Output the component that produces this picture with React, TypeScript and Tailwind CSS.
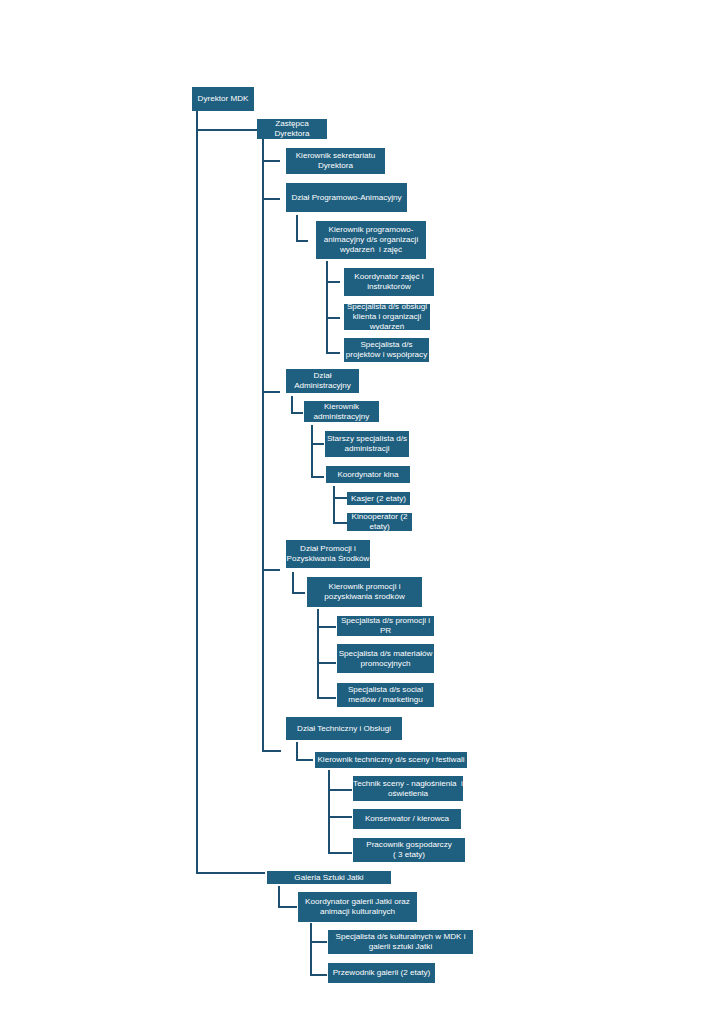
import React from "react";

type OrgNode = {
  lines: string[];
  x: number;
  y: number;
  w: number;
  h: number;
};

const nodes: OrgNode[] = [
  { lines: ["Dyrektor MDK"], x: 192, y: 87, w: 62, h: 24 },
  { lines: ["Zastępca", "Dyrektora"], x: 257, y: 119, w: 70, h: 20 },
  { lines: ["Kierownik sekretariatu", "Dyrektora"], x: 286, y: 148, w: 99, h: 26 },
  { lines: ["Dział Programowo-Animacyjny"], x: 286, y: 183, w: 121, h: 29 },
  {
    lines: ["Kierownik programowo-", "animacyjny d/s organizacji", "wydarzeń  i zajęć"],
    x: 316,
    y: 221,
    w: 110,
    h: 38,
  },
  { lines: ["Koordynator zajęć i", "instruktorów"], x: 344, y: 268, w: 90, h: 28 },
  {
    lines: ["Specjalista d/s obsługi", "klienta i organizacji", "wydarzeń"],
    x: 344,
    y: 304,
    w: 86,
    h: 26,
  },
  { lines: ["Specjalista d/s", "projektów i współpracy"], x: 344, y: 338, w: 85, h: 24 },
  { lines: ["Dział", "Administracyjny"], x: 286, y: 369, w: 73, h: 24 },
  { lines: ["Kierownik", "administracyjny"], x: 304, y: 401, w: 75, h: 21 },
  { lines: ["Starszy specjalista d/s", "administracji"], x: 325, y: 431, w: 84, h: 26 },
  { lines: ["Koordynator kina"], x: 326, y: 466, w: 84, h: 17 },
  { lines: ["Kasjer (2 etaty)"], x: 347, y: 492, w: 63, h: 13 },
  { lines: ["Kinooperator (2", "etaty)"], x: 347, y: 513, w: 65, h: 18 },
  { lines: ["Dział Promocji i", "Pozyskiwania Środków"], x: 286, y: 540, w: 84, h: 28 },
  { lines: ["Kierownik promocji i", "pozyskiwania środków"], x: 307, y: 577, w: 115, h: 30 },
  { lines: ["Specjalista d/s promocji i", "PR"], x: 337, y: 616, w: 97, h: 20 },
  { lines: ["Specjalista d/s materiałów", "promocyjnych"], x: 337, y: 644, w: 97, h: 29 },
  { lines: ["Specjalista d/s social", "mediów / marketingu"], x: 337, y: 683, w: 97, h: 24 },
  { lines: ["Dział Techniczny i Obsługi"], x: 286, y: 717, w: 116, h: 23 },
  { lines: ["Kierownik techniczny d/s sceny i festiwali"], x: 315, y: 752, w: 152, h: 16 },
  { lines: ["Technik sceny - nagłośnienia  i", "oświetlenia"], x: 353, y: 776, w: 110, h: 25 },
  { lines: ["Konserwator / kierowca"], x: 353, y: 809, w: 108, h: 20 },
  { lines: ["Pracownik gospodarczy", "( 3 etaty)"], x: 353, y: 838, w: 112, h: 24 },
  { lines: ["Galeria Sztuki Jatki"], x: 267, y: 871, w: 124, h: 13 },
  { lines: ["Koordynator galerii Jatki oraz", "animacji kulturalnych"], x: 298, y: 892, w: 119, h: 30 },
  {
    lines: ["Specjalista d/s kulturalnych w MDK i", "galerii sztuki Jatki"],
    x: 328,
    y: 930,
    w: 145,
    h: 24,
  },
  { lines: ["Przewodnik galerii (2 etaty)"], x: 328, y: 963, w: 107, h: 20 },
];

// elbow connectors: vertical trunk then a horizontal to the child
const connectors = [
  "M197 111 V873 H265",
  "M197 130 H257",
  "M263 139 V751 H281",
  "M263 161 H280",
  "M263 199 H280",
  "M263 392 H280",
  "M263 570 H280",
  "M297 215 V241 H308",
  "M327 261 V353 H340",
  "M327 282 H340",
  "M327 318 H340",
  "M292 396 V413 H303",
  "M312 425 V477 H324",
  "M312 444 H324",
  "M334 486 V523 H347",
  "M334 498 H347",
  "M293 572 V593 H305",
  "M318 609 V698 H336",
  "M318 627 H336",
  "M318 663 H336",
  "M297 742 V760 H313",
  "M329 770 V853 H352",
  "M329 790 H352",
  "M329 817 H352",
  "M279 886 V907 H297",
  "M311 923 V975 H327",
  "M311 942 H327",
];

function Box({ node }: { node: OrgNode }) {
  return (
    <div
      className="absolute flex flex-col items-center justify-center overflow-visible bg-[#1f5f80] text-center text-[8.1px] leading-[10px] text-white"
      style={{ left: node.x, top: node.y, width: node.w, height: node.h }}
    >
      {node.lines.map((line, i) => (
        <span key={i} className="whitespace-pre">
          {line}
        </span>
      ))}
    </div>
  );
}

export default function App() {
  return (
    <div className="relative h-[1024px] w-[724px] overflow-hidden bg-white font-['Liberation_Sans',Arial,sans-serif]">
      <svg className="absolute inset-0" width={724} height={1024} fill="none">
        {connectors.map((d, i) => (
          <path key={i} d={d} stroke="#1d5070" strokeWidth={2} strokeLinejoin="miter" />
        ))}
      </svg>
      {nodes.map((n, i) => (
        <Box key={i} node={n} />
      ))}
    </div>
  );
}
